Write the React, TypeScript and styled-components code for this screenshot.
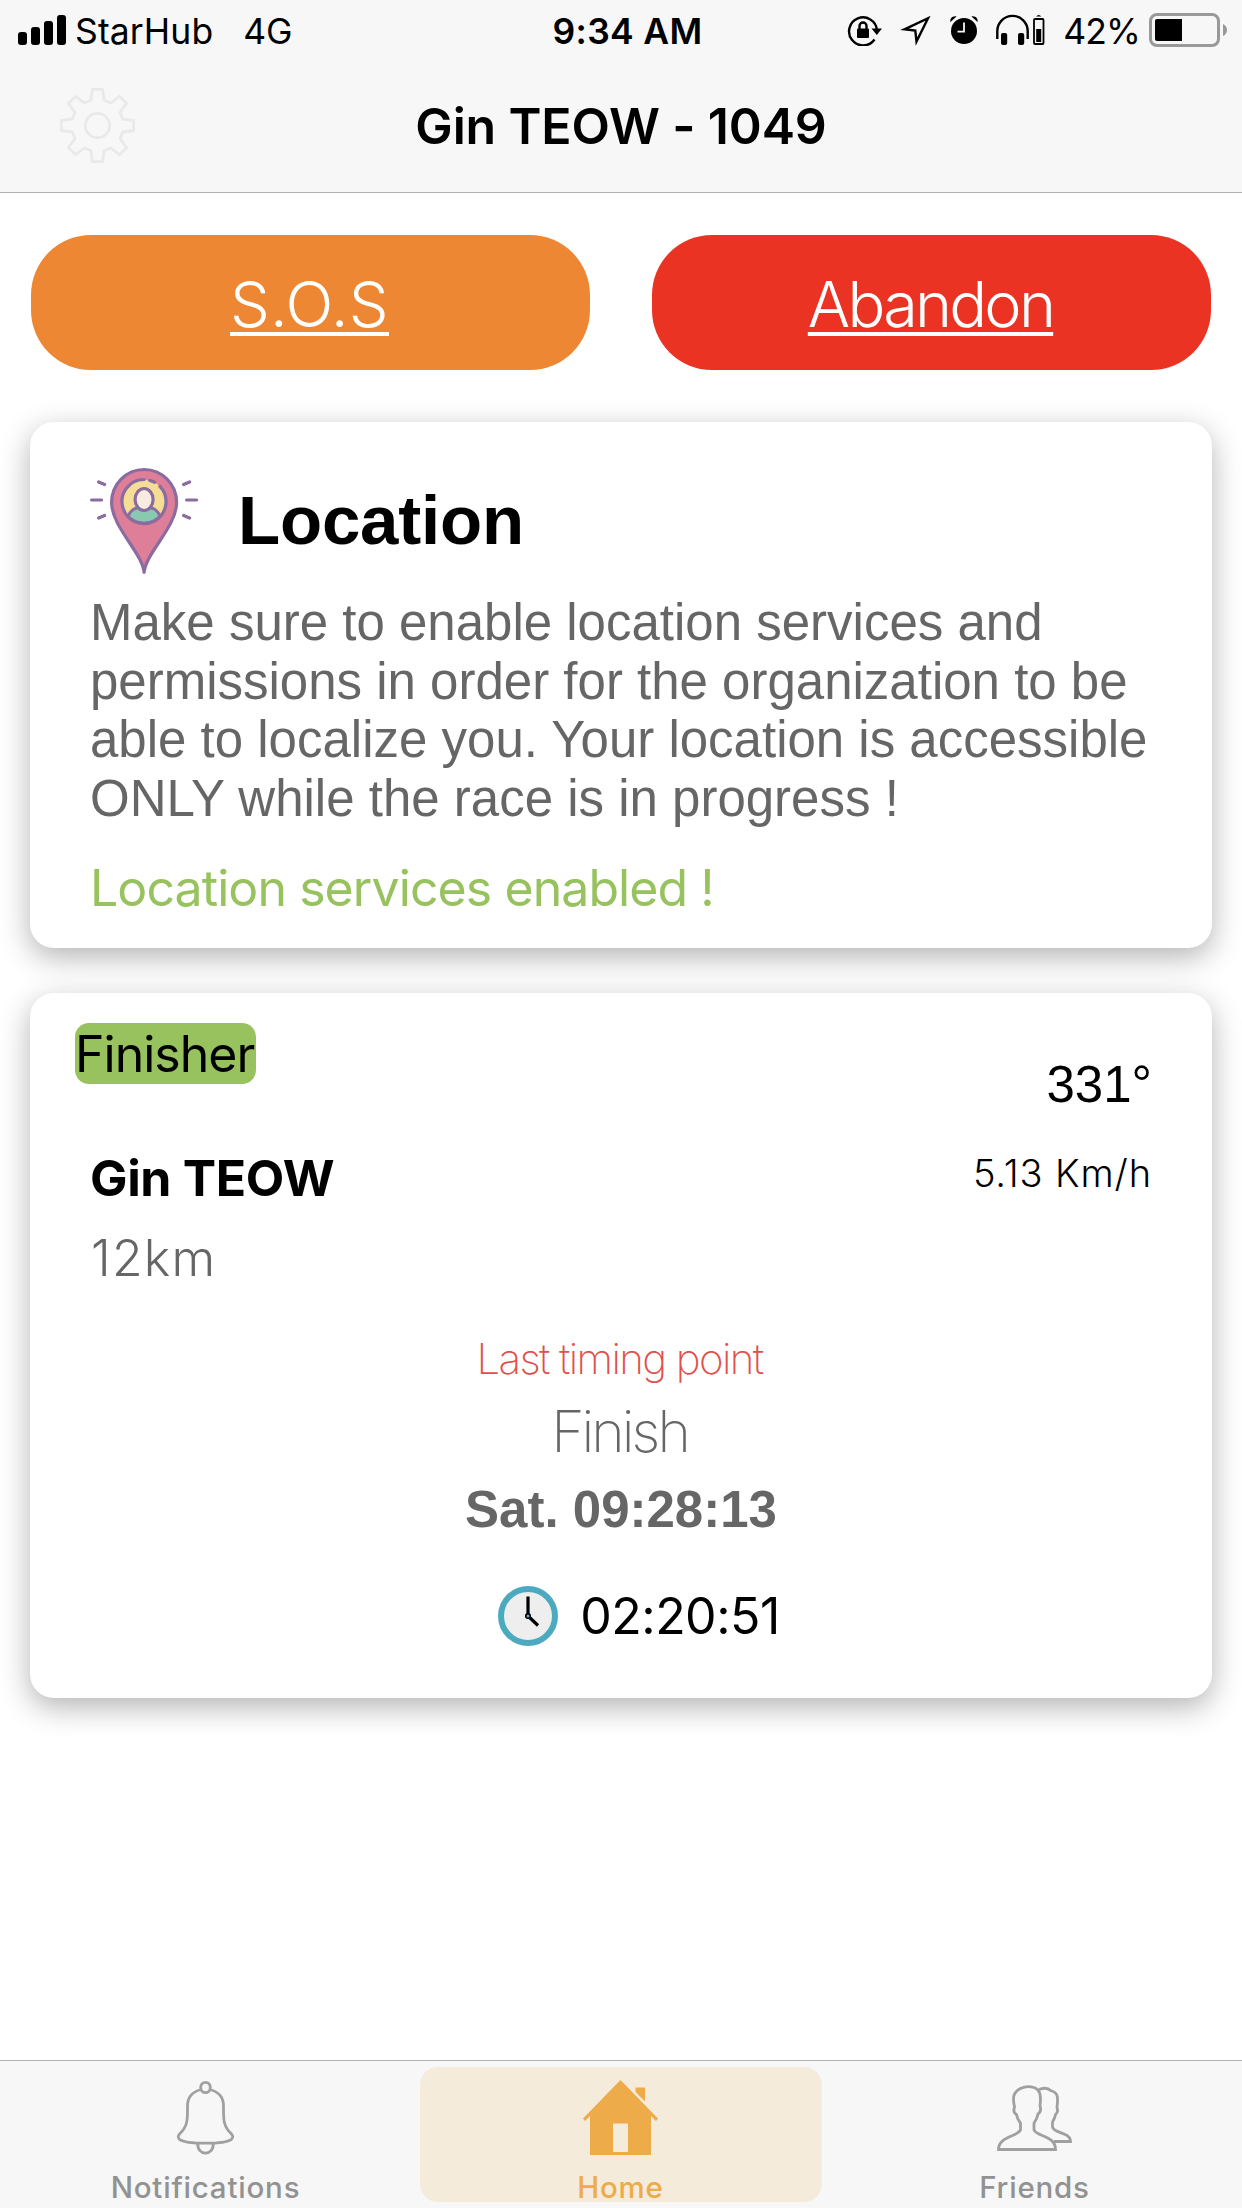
import React from "react";
import styled, { createGlobalStyle } from "styled-components";

const Global = createGlobalStyle`
  *, *::before, *::after { box-sizing: border-box; }
  body { margin: 0; background: #fff; }
`;

const sf = `Inter, "Noto Sans", sans-serif`;
const helvetica = `"Liberation Sans", Arial, sans-serif`;

interface TextProps {
  $size: number;
  $line: number;
  $weight?: number;
  $color?: string;
  $track?: number;
  $font?: string;
  $mt?: number;
}

const Text = styled.div<TextProps>`
  font-family: ${(p) => p.$font ?? sf};
  font-size: ${(p) => p.$size}px;
  line-height: ${(p) => p.$line}px;
  font-weight: ${(p) => p.$weight ?? 400};
  color: ${(p) => p.$color ?? "#000"};
  letter-spacing: ${(p) => p.$track ?? 0}px;
  margin-top: ${(p) => p.$mt ?? 0}px;
  white-space: nowrap;
`;

const Screen = styled.div`
  display: flex;
  flex-direction: column;
  width: 1242px;
  height: 2208px;
  background: #fff;
  overflow: hidden;
`;

const Header = styled.header`
  height: 193px;
  background: #f7f7f7;
  border-bottom: 1px solid #b2b2b2;
`;

const StatusBar = styled.div`
  display: grid;
  grid-template-columns: 1fr auto 1fr;
  align-items: center;
  height: 60px;
  padding: 0 15px 0 18px;
`;

const StatusLeft = styled.div`
  display: flex;
  align-items: center;
`;

const Carrier = styled(Text)`
  margin: 3px 0 0 9px;
`;

const Network = styled(Text)`
  margin: 3px 0 0 30px;
`;

const StatusTime = styled(Text)`
  margin: 3px 0 0 10px;
`;

const StatusRight = styled.div`
  display: flex;
  justify-content: flex-end;
  align-items: center;
`;

const Percent = styled(Text)`
  margin: 3px 9px 0 18px;
`;

const NavBar = styled.div`
  display: grid;
  grid-template-columns: 160px 1fr 160px;
  align-items: center;
  height: 132px;
`;

const GearSlot = styled.div`
  padding: 0 0 0 60px;
  height: 76px;
`;

const NavTitle = styled(Text)`
  text-align: center;
`;

const Content = styled.main`
  flex: 1;
  display: flex;
  flex-direction: column;
  padding: 42px 30px 0;
`;

const Actions = styled.div`
  display: flex;
  gap: 62px;
  padding: 0 1px;
`;

const ActionButton = styled.button<{ $bg: string; $track: number }>`
  flex: 1;
  height: 135px;
  border: 0;
  padding: 3px 2px 0 0;
  border-radius: 60px;
  background: ${(p) => p.$bg};
  color: #fff;
  font-family: ${sf};
  font-weight: 300;
  font-size: 63px;
  letter-spacing: ${(p) => p.$track}px;
  text-decoration: underline;
  text-decoration-thickness: 4px;
  text-underline-offset: 5px;
  text-decoration-skip-ink: none;
`;

const Card = styled.section<{ $h: number; $mt: number }>`
  height: ${(p) => p.$h}px;
  margin-top: ${(p) => p.$mt}px;
  border-radius: 24px;
  background: #fff;
  box-shadow: 0 9px 30px rgba(0, 0, 0, 0.3);
  flex: none;
`;

const LocationCard = styled(Card)`
  padding: 45px 60px 0;
`;

const LocationHead = styled.div`
  display: flex;
  gap: 39px;
  height: 110px;
`;

const Paragraph = styled.p`
  margin: 17px 0 0;
  font: 400 51px/58.5px ${helvetica};
  color: #666;
  white-space: nowrap;
`;

const RunnerCard = styled(Card)`
  display: flex;
  flex-direction: column;
  padding: 30px 60px 0;
`;

const Badge = styled(Text)`
  width: 181px;
  height: 61px;
  margin-left: -15px;
  border-radius: 14px;
  background: #97c25e;
`;

const RunnerInfo = styled.div`
  display: flex;
  justify-content: space-between;
  height: 220px;
`;

const Category = styled(Text)`
  padding-left: 1px;
`;

const Stats = styled.div`
  display: flex;
  flex-direction: column;
  align-items: flex-end;
  margin-top: -29px;
`;

const Timing = styled.div`
  display: flex;
  flex-direction: column;
  align-items: center;
`;

const TimingLabel = styled(Text)`
  padding-right: 3px;
`;

const Elapsed = styled.div`
  display: flex;
  align-items: center;
  gap: 22px;
  margin: 46px 0 0 36px;
`;

const TabBar = styled.nav`
  display: grid;
  grid-template-columns: 411px 420px 407px;
  height: 148px;
  border-top: 1px solid #b2b2b2;
  background: #f7f7f7;
`;

const Tab = styled.div<{ $active?: boolean }>`
  display: flex;
  flex-direction: column;
  align-items: center;
  height: 135px;
  margin: 6px ${(p) => (p.$active ? "9px 0" : "0")};
  padding: 13px ${(p) => (p.$active ? "1px" : "0")} 0 0;
  border-radius: 18px;
  background: ${(p) => (p.$active ? "#f5ebdb" : "transparent")};

  svg {
    flex: none;
  }
`;

const Signal = () => (
  <svg width="48" height="30" viewBox="0 0 48 30">
    <rect x="0" y="17" width="9" height="13" rx="3" />
    <rect x="13" y="12" width="9" height="18" rx="3" />
    <rect x="26" y="6" width="9" height="24" rx="3" />
    <rect x="39" y="0" width="9" height="30" rx="3" />
  </svg>
);

const StatusIcons = () => (
  <svg width="198" height="32" viewBox="847 14 198 32">
    <g fill="none" stroke="#000" strokeWidth="2.4">
      <path d="M874.5 39.5A14 14 0 1 1 877 30" />
      <path d="M859.5 30v-4a3.5 3.5 0 0 1 7 0v4" />
    </g>
    <rect x="857" y="28.5" width="12" height="9.5" rx="1" />
    <path d="M871.5 28.5h10.5l-5.2 6.5z" />
    <path d="M904.5 29.3 928 18.2 916.5 41.5 915.3 30.5z" fill="none" stroke="#000" strokeWidth="2.4" />
    <circle cx="964" cy="31" r="13" />
    <path d="M964 22.5v9.2h-6.5" fill="none" stroke="#f7f7f7" strokeWidth="1.8" />
    <path d="M950.5 22c-1-3 2-6.500 6-5.500zM977.500 22c1-3-2-6.500-6-5.500z" />
    <path d="M997.3 39v-8a15.200 15.200 0 0 1 30.400 0v8" fill="none" stroke="#000" strokeWidth="2.4" />
    <rect x="1001" y="33" width="6.2" height="12" rx="2" />
    <rect x="1018" y="33" width="6.2" height="12" rx="2" />
    <rect x="1034" y="19" width="9.5" height="25" rx="1" fill="none" stroke="#000" strokeWidth="1.8" />
    <rect x="1036.2" y="29" width="5" height="13" />
    <path d="M1036 16.5q2.700-3 5.400 0z" />
  </svg>
);

const Battery = () => (
  <svg width="78" height="34" viewBox="0 0 78 34">
    <rect x="1.5" y="1.5" width="68" height="31" rx="6.5" fill="none" stroke="#999" strokeWidth="3" />
    <path d="M74 11q4 2 4 6t-4 6z" fill="#999" />
    <path d="M8 6h25v22H8q-2 0-2-2V8q0-2 2-2z" />
  </svg>
);

const gearPath = () => {
  const pts: string[] = [];
  for (let i = 0; i < 8; i++) {
    const a = (i * Math.PI) / 4;
    const reach = 36.2;
    const at = (x: number, y: number) =>
      `${(37.5 + x * Math.cos(a) - y * Math.sin(a)).toFixed(2)} ${(37.5 + x * Math.sin(a) + y * Math.cos(a)).toFixed(2)}`;
    pts.push(at(-6.6, -25.2), at(-5, -reach), at(5, -reach), at(6.6, -25.2));
  }
  return `M${pts.join("L")}Z`;
};

const Gear = () => (
  <svg width="75" height="75" viewBox="0 0 75 75" fill="none" stroke="#e9e9e9" strokeWidth="2.8">
    <path d={gearPath()} />
    <circle cx="37.5" cy="37.5" r="12.2" />
  </svg>
);

const Pin = () => (
  <svg width="109" height="109" viewBox="0.4 0 109 109" stroke="#8a6ca0" strokeWidth="3.2" strokeLinecap="round" strokeLinejoin="round">
    <path d="M54.5 105.500C53 86 22 60 22 35.500a32.500 33 0 0 1 65 0C87 60 56 86 54.500 105.500z" fill="#de7e98" />
    <circle cx="54.5" cy="34.5" r="21.8" fill="#f6dd96" stroke="none" />
    <path d="M38.500 49.500c2-6 7-8.500 10-9 3 3 9 3 12 0 3 .5 8 3 10 9-8 9-24 9-32 0z" fill="#88c9b1" />
    <path d="M54.500 12.500a22 22 0 1 0 15.800 6.800M60 13.300l5 2" fill="none" />
    <ellipse cx="54.5" cy="32.5" rx="9" ry="11" fill="#f7ecdf" />
    <path d="M2 33h10M97 33h10M9 15l6 2.500M100 15l-6 2.500M9 51l6-2.500M100 51l-6-2.500" fill="none" />
  </svg>
);

const Clock = () => (
  <svg width="60" height="60" viewBox="0 0 60 60">
    <circle cx="30" cy="30" r="27" fill="#eee" stroke="#4baabf" strokeWidth="6" />
    <path d="M30 10.5V30l10 9.5" fill="none" stroke="#000" strokeWidth="3.2" />
    <circle cx="30" cy="30" r="2.3" fill="#4baabf" stroke="#000" strokeWidth="1.5" />
  </svg>
);

const Bell = () => (
  <svg width="75" height="75" viewBox="0 0 75 75" fill="none" stroke="#a0a0a0" strokeWidth="2.8">
    <ellipse cx="37.5" cy="7.5" rx="4.8" ry="5.2" />
    <path d="M33.500 9.500C24 11.500 19.500 18 19.500 26c0 13 .5 20-7.500 27.500-2 2-2.500 4-.5 5.800 7 5.200 45 5.200 52 0 2-1.800 1.500-3.800-.5-5.800-8-7.500-7.500-14.500-7.500-27.500 0-8-4.500-14.500-14-16.500" />
    <path d="M29.800 63c-1 13.500 16.400 13.500 15.400 0" />
  </svg>
);

const House = () => (
  <svg width="75" height="75" viewBox="0 0 75 75" fill="#eeab4a">
    <path d="M37.500 0 75 38.500l-2 2.500-5-5V75H7V36l-5 5-2-2.500zM30 43.500V72h15V43.500z" fillRule="evenodd" />
    <path d="M52.500 7.500H62V21.500L52.500 12z" />
  </svg>
);

const People = () => (
  <svg width="75" height="75" viewBox="0 0 75 75" fill="none" stroke="#a0a0a0" strokeWidth="2.8">
    <path d="M1.500 69.500h57c0-14-19-13-21.500-19.500v-7c2.500-3.500 3-4 4-9 3-2 3-5 2-8 1.500-12-.5-16.500-6-18.500C28 5 16.500 9 16.500 19c0 3 .5 5 1 8-1 3-1 6 2 7.500 1 5 1.500 5 4 8.500v7C20 57 1.500 56.500 1.500 69.500z" />
    <path d="M41 10.500c4-3.500 10-2.500 12.500 0 7 2 8 5 6.500 17 1 3 1 5-1.500 7-1 5-1.500 4-3 7.500v5c1 6.500 18 5 18 14.500H57" />
  </svg>
);

const muted = "#929292";

export default function App() {
  return (
    <Screen>
      <Global />
      <Header>
        <StatusBar>
          <StatusLeft>
            <Signal />
            <Carrier $size={35.5} $line={40} $track={0.1}>StarHub</Carrier>
            <Network $size={35.5} $line={40} $track={-0.2}>4G</Network>
          </StatusLeft>
          <StatusTime $size={35.5} $line={40} $weight={600} $track={0.3}>9:34 AM</StatusTime>
          <StatusRight>
            <StatusIcons />
            <Percent $size={35.5} $line={40} $track={-0.9}>42%</Percent>
            <Battery />
          </StatusRight>
        </StatusBar>
        <NavBar>
          <GearSlot><Gear /></GearSlot>
          <NavTitle $size={50} $line={60} $weight={600} $track={-0.15}>Gin TEOW - 1049</NavTitle>
        </NavBar>
      </Header>
      <Content>
        <Actions>
          <ActionButton $bg="#ee8734" $track={0.3}>S.O.S</ActionButton>
          <ActionButton $bg="#ea3323" $track={-2.8}>Abandon</ActionButton>
        </Actions>
        <LocationCard $h={526} $mt={52}>
          <LocationHead>
            <Pin />
            <Text $size={69} $line={80} $weight={700} $font={helvetica} $track={-0.2} $mt={14}>Location</Text>
          </LocationHead>
          <Paragraph>
            Make sure to enable location services and<br />
            permissions in order for the organization to be<br />
            able to localize you. Your location is accessible<br />
            ONLY while the race is in progress !
          </Paragraph>
          <Text $size={50} $line={60} $color="#97c25e" $track={-0.92} $mt={30}>Location services enabled !</Text>
        </LocationCard>
        <RunnerCard $h={705} $mt={45}>
          <Badge $size={50} $line={62} $track={-1}>Finisher</Badge>
          <RunnerInfo>
            <div>
              <Text $size={50} $line={60} $weight={700} $track={-0.35} $mt={64}>Gin TEOW</Text>
              <Category $size={50} $line={60} $weight={300} $color="#666" $track={1.2} $mt={20}>12km</Category>
            </div>
            <Stats>
              <Text $size={51} $line={60} $font={helvetica}>331°</Text>
              <Text $size={38} $line={50} $weight={300} $track={0.9} $mt={33}>5.13 Km/h</Text>
            </Stats>
          </RunnerInfo>
          <Timing>
            <TimingLabel $size={42} $line={50} $weight={200} $color="#e0504a" $track={-1.6} $mt={30}>Last timing point</TimingLabel>
            <TimingLabel $size={57} $line={66} $weight={200} $color="#666" $track={-3} $mt={15}>Finish</TimingLabel>
            <Text $size={51} $line={60} $weight={700} $color="#666" $font={helvetica} $mt={15}>Sat. 09:28:13</Text>
            <Elapsed>
              <Clock />
              <Text $size={50} $line={60} $track={-0.5}>02:20:51</Text>
            </Elapsed>
          </Timing>
        </RunnerCard>
      </Content>
      <TabBar>
        <Tab>
          <Bell />
          <Text $size={29.5} $line={36} $weight={500} $track={0.8} $color={muted} $mt={14}>Notifications</Text>
        </Tab>
        <Tab $active>
          <House />
          <Text $size={29.5} $line={36} $weight={500} $track={0.8} $color="#eeab4a" $mt={14}>Home</Text>
        </Tab>
        <Tab>
          <People />
          <Text $size={29.5} $line={36} $weight={500} $track={0.8} $color={muted} $mt={14}>Friends</Text>
        </Tab>
      </TabBar>
    </Screen>
  );
}
